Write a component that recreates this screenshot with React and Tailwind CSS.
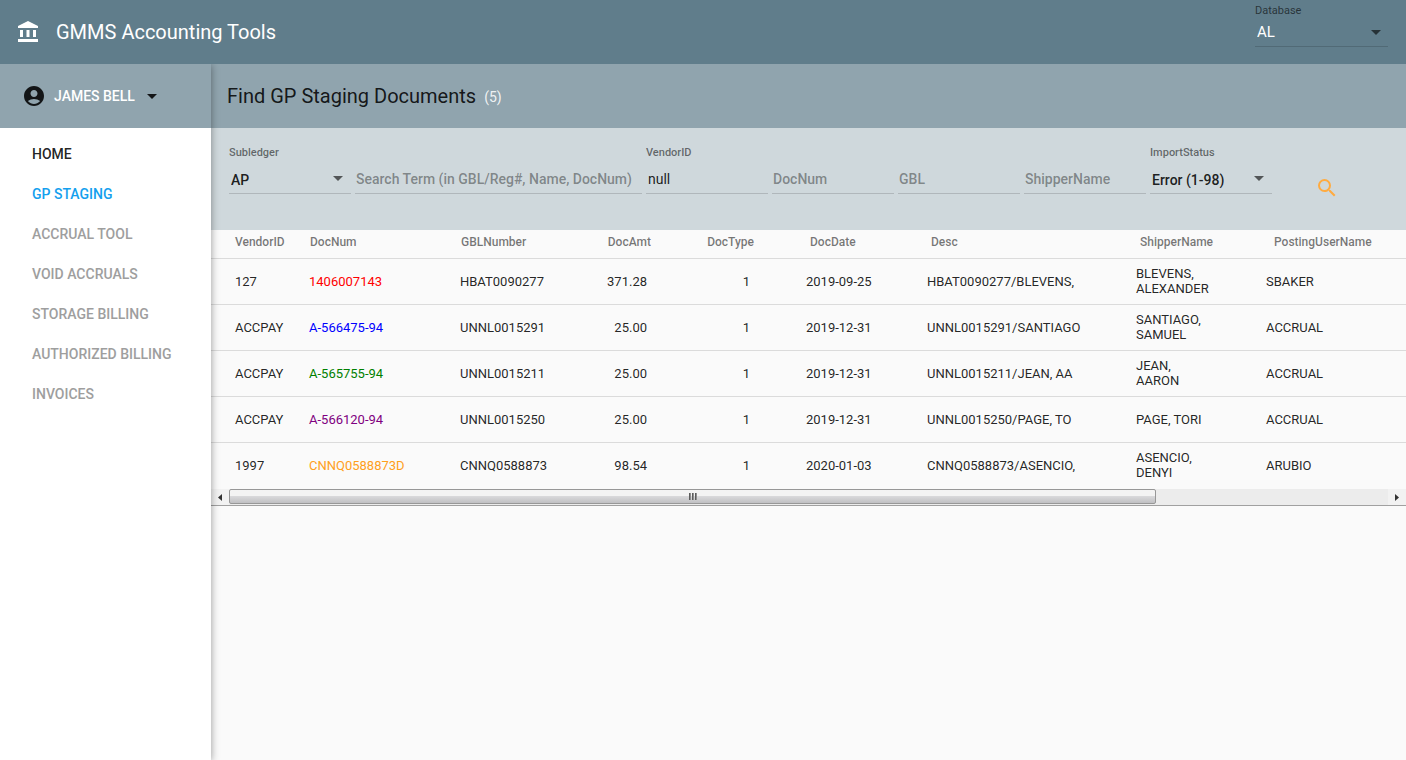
import React, { useState } from 'react';
import { MdAccountBalance, MdAccountCircle, MdSearch } from 'react-icons/md';

const navItems = [
  { name: 'HOME', className: 'text-black/87' },
  { name: 'GP STAGING', className: 'text-[#14a0ee]' },
  { name: 'ACCRUAL TOOL', className: 'text-[#9e9e9e]' },
  { name: 'VOID ACCRUALS', className: 'text-[#9e9e9e]' },
  { name: 'STORAGE BILLING', className: 'text-[#9e9e9e]' },
  { name: 'AUTHORIZED BILLING', className: 'text-[#9e9e9e]' },
  { name: 'INVOICES', className: 'text-[#9e9e9e]' }
];

const columns = [
  { id: 'vendorId', name: 'VendorID', col: 'w-[98px]', head: 'pl-6', cell: 'pl-6' },
  { id: 'docNum', name: 'DocNum', col: 'w-[151px]', head: 'pl-px', cell: '' },
  { id: 'gblNumber', name: 'GBLNumber', col: 'w-[147px]', head: 'pl-px', cell: '' },
  { id: 'docAmt', name: 'DocAmt', col: 'w-24', head: 'pr-13 text-right', cell: 'pr-14 text-right' },
  { id: 'docType', name: 'DocType', col: 'w-[103px]', head: 'pr-13 text-right', cell: 'pr-14 text-right' },
  { id: 'docDate', name: 'DocDate', col: 'w-[121px]', head: 'pl-1', cell: '' },
  { id: 'desc', name: 'Desc', col: 'w-[209px]', head: 'pl-1', cell: 'pr-14' },
  { id: 'shipperName', name: 'ShipperName', col: 'w-[130px]', head: 'pl-1', cell: 'pr-14' },
  { id: 'postingUser', name: 'PostingUserName', col: '', head: 'pl-2', cell: '' }
];

const rows = [
  { vendorId: '127', docNum: '1406007143', color: 'text-[#ff0000]', gblNumber: 'HBAT0090277', docAmt: '371.28', docType: '1', docDate: '2019-09-25', desc: 'HBAT0090277/BLEVENS,', shipperName: 'BLEVENS, ALEXANDER', postingUser: 'SBAKER' },
  { vendorId: 'ACCPAY', docNum: 'A-566475-94', color: 'text-[#0000ff]', gblNumber: 'UNNL0015291', docAmt: '25.00', docType: '1', docDate: '2019-12-31', desc: 'UNNL0015291/SANTIAGO', shipperName: 'SANTIAGO, SAMUEL', postingUser: 'ACCRUAL' },
  { vendorId: 'ACCPAY', docNum: 'A-565755-94', color: 'text-[#008000]', gblNumber: 'UNNL0015211', docAmt: '25.00', docType: '1', docDate: '2019-12-31', desc: 'UNNL0015211/JEAN, AA', shipperName: 'JEAN, AARON', postingUser: 'ACCRUAL' },
  { vendorId: 'ACCPAY', docNum: 'A-566120-94', color: 'text-[#800080]', gblNumber: 'UNNL0015250', docAmt: '25.00', docType: '1', docDate: '2019-12-31', desc: 'UNNL0015250/PAGE, TO', shipperName: 'PAGE, TORI', postingUser: 'ACCRUAL' },
  { vendorId: '1997', docNum: 'CNNQ0588873D', color: 'text-[#ff9f1c]', gblNumber: 'CNNQ0588873', docAmt: '98.54', docType: '1', docDate: '2020-01-03', desc: 'CNNQ0588873/ASENCIO,', shipperName: 'ASENCIO, DENYI', postingUser: 'ARUBIO' }
];

const Caret = ({ className }) => (
  <svg viewBox="0 0 10 5" className={`h-[5px] w-[10px] ${className}`} fill="currentColor" aria-hidden="true">
    <path d="M0 0h10L5 5z" />
  </svg>
);

const TextField = ({ id, label, value, placeholder, className = 'w-[122px]' }) => {
  const [text, setText] = useState(value || '');

  return (
    <div className={`flex flex-col ${className}`}>
      {label && <label htmlFor={id} className="h-4 text-[11px] leading-4 font-medium text-black/54">{label}</label>}
      <input
        id={id}
        type="text"
        value={text}
        placeholder={placeholder}
        aria-label={label ? undefined : placeholder}
        onChange={(e) => setText(e.target.value)}
        className={`mt-auto h-[30px] w-full border-b border-black/15 text-sm text-black/87 outline-none placeholder:font-medium placeholder:text-black/40 ${
          label ? 'px-0.5' : 'px-px'
        }`}
      />
    </div>
  );
};

const SelectField = ({ id, label, options }) => (
  <div className="flex w-[122px] flex-col">
    <label htmlFor={id} className="h-4 text-[11px] leading-4 font-medium text-black/54">{label}</label>
    <div className="relative mt-auto">
      <select
        id={id}
        className="block h-[30px] w-full appearance-none border-b border-black/15 px-0.5 pt-0.5 text-sm font-medium text-black/87 outline-none"
      >
        {options.map((option) => <option key={option}>{option}</option>)}
      </select>
      <Caret className="pointer-events-none absolute top-3 right-2 text-black/60" />
    </div>
  </div>
);

const ScrollBar = () => (
  <div className="mt-px flex h-[17px] items-stretch border-b border-[#a0a0a0] bg-[#ececec]">
    <div className="flex w-[18px] items-center justify-center bg-[#f2f2f2]">
      <svg viewBox="0 0 4 7" className="h-[7px] w-1" fill="#333"><path d="M4 0v7L0 3.5z" /></svg>
    </div>
    <div className="flex flex-1">
      <div className="mb-px flex w-4/5 items-center justify-center gap-px rounded-xs border border-[#979797] bg-linear-to-b from-[#f3f3f3] from-45% via-[#d8d8da] via-50% to-[#c0c0c3]">
        <span className="h-[7px] w-0.5 bg-linear-to-r from-[#444] to-[#aaa]" />
        <span className="h-[7px] w-0.5 bg-linear-to-r from-[#444] to-[#aaa]" />
        <span className="h-[7px] w-0.5 bg-linear-to-r from-[#444] to-[#aaa]" />
      </div>
    </div>
    <div className="flex w-[18px] items-center justify-center bg-[#f2f2f2]">
      <svg viewBox="0 0 4 7" className="h-[7px] w-1" fill="#333"><path d="M0 0v7l4-3.5z" /></svg>
    </div>
  </div>
);

const App = () => {
  return (
    <div className="flex min-h-screen flex-col bg-[#fafafa] font-[Roboto,sans-serif] text-black/87">
      {/* Top bar */}
      <header className="flex h-16 items-center justify-between bg-[#607d8b] pr-[18px] pl-4 text-white">
        <div className="flex items-center gap-4">
          <MdAccountBalance className="h-6 w-6" />
          <h1 className="text-xl">GMMS Accounting Tools</h1>
        </div>
        <div className="flex w-[133px] flex-col self-start pt-[3px]">
          <label htmlFor="database" className="h-4 text-[11px] leading-4 text-black/60">Database</label>
          <div className="relative">
            <select
              id="database"
              className="block h-7 w-full appearance-none border-b border-black/15 px-0.5 text-[15px] text-white outline-none"
            >
              <option>AL</option>
            </select>
            <Caret className="pointer-events-none absolute top-[11px] right-[7px] text-black/60" />
          </div>
        </div>
      </header>

      <div className="flex flex-1">
        {/* Sidebar */}
        <aside className="z-10 flex w-[211px] shrink-0 flex-col bg-white shadow-[0_1px_8px_rgba(0,0,0,0.4)] [clip-path:inset(0_-12px_0_0)]">
          <button type="button" className="flex h-16 items-center bg-[#90a4ae] pl-[22px] text-sm font-medium text-white">
            <MdAccountCircle className="mr-2 h-6 w-6 text-black/87" />
            JAMES BELL
            <Caret className="ml-3 text-black/87" />
          </button>
          <nav className="flex flex-col pt-1.5">
            {navItems.map((item) => (
              <a key={item.name} href="#" className={`h-10 pl-8 text-sm leading-10 font-medium ${item.className}`}>
                {item.name}
              </a>
            ))}
          </nav>
        </aside>

        <main className="flex min-w-0 flex-1 flex-col">
          <div className="flex h-16 items-center gap-2 bg-[#90a4ae] pl-4">
            <h2 className="text-xl">Find GP Staging Documents</h2>
            <span className="pt-0.5 text-sm text-white/87">(5)</span>
          </div>

          {/* Filters */}
          <form className="flex h-[102px] gap-1 bg-[#cfd8dc] pt-[17px] pb-9 pl-[18px]" onSubmit={(e) => e.preventDefault()}>
            <SelectField id="subledger" label="Subledger" options={['AP', 'AR']} />
            <TextField id="search" placeholder="Search Term (in GBL/Reg#, Name, DocNum)" className="w-[287px]" />
            <TextField id="vendor" label="VendorID" value="null" />
            <TextField id="docnum" placeholder="DocNum" />
            <TextField id="gbl" placeholder="GBL" />
            <TextField id="shipper" placeholder="ShipperName" />
            <SelectField id="status" label="ImportStatus" options={['Error (1-98)']} />
            <button type="submit" aria-label="Search" className="ml-[39px] flex items-end pt-7 text-[#ffab40]">
              <MdSearch className="h-6 w-6 translate-y-1.5" />
            </button>
          </form>

          {/* Results */}
          <table className="w-full table-fixed">
            <colgroup>
              {columns.map((column) => <col key={column.id} className={column.col} />)}
            </colgroup>
            <thead>
              <tr className="h-7 border-b border-black/12">
                {columns.map((column) => (
                  <th
                    key={column.id}
                    className={`pb-1 text-left text-xs font-medium whitespace-nowrap text-black/54 ${column.head}`}
                  >
                    {column.name}
                  </th>
                ))}
              </tr>
            </thead>
            <tbody>
              {rows.map((row) => (
                <tr key={row.docNum} className="h-[46px] border-b border-black/12 last:border-b-0">
                  {columns.map((column) => (
                    <td key={column.id} className={`text-[13px] leading-[15px] ${column.cell}`}>
                      {column.id === 'docNum' ? <a href="#" className={row.color}>{row.docNum}</a> : row[column.id]}
                    </td>
                  ))}
                </tr>
              ))}
            </tbody>
          </table>
          <ScrollBar />
        </main>
      </div>
    </div>
  );
};

export default App;
